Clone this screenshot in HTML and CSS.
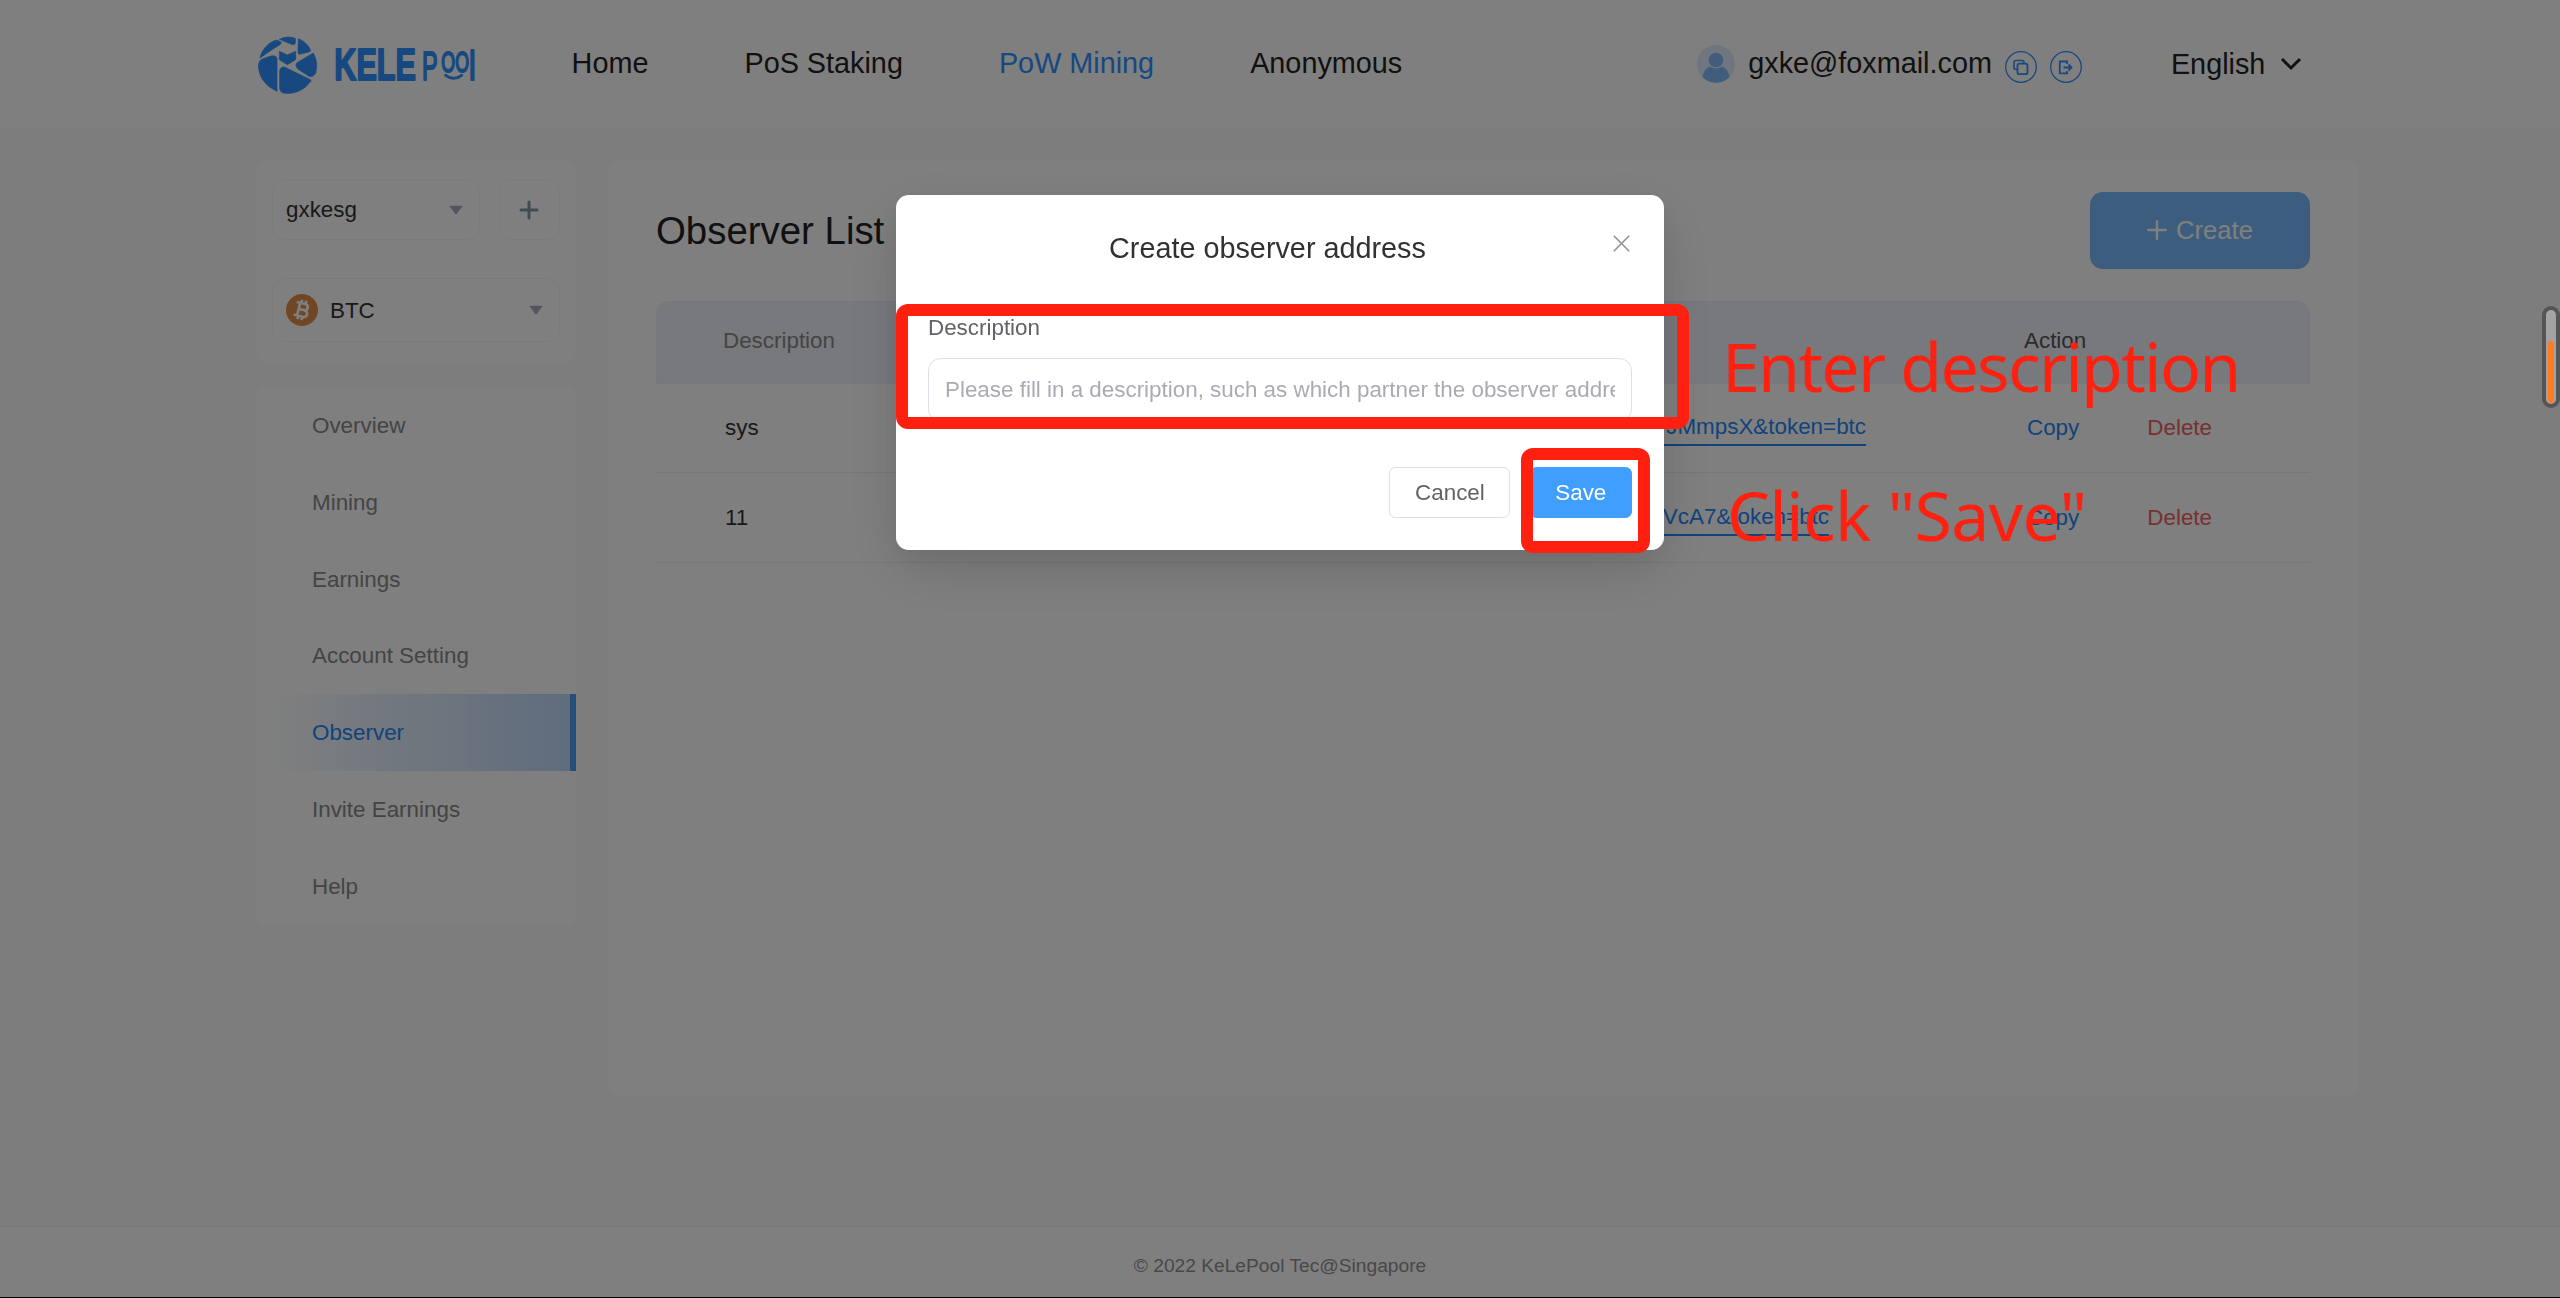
FILE: index.html
```html
<!DOCTYPE html>
<html lang="en">
<head>
<meta charset="utf-8">
<title>KelePool - Observer</title>
<link rel="stylesheet" href="styles.css">
</head>
<body>
<div class="page">
  <header class="header">
    <svg class="logo" viewBox="55 48 651 174" role="img" aria-label="KELE Pool">
      <g fill="#2f90ff" stroke="#2f90ff" stroke-width="2" stroke-linejoin="round">
        <path d="M61 114C66 90 86 66 112 60L124 66Q126 70 121 74L94 91Z"/>
        <path d="M119 58Q142 46 167 55V68Q167 77 156 73Z"/>
        <path d="M176 56Q202 66 213 91Q212 96 205 97L178 103Q174 101 175 92Z"/>
        <path d="M119 94L143 105L168 94V119L143 134L119 119Z"/>
        <path d="M112 214Q60 190 56 140Q57 122 66 118L90 109Q108 104 112 114Z"/>
        <path d="M221 99Q237 128 228 160Q220 173 208 169L176 148Q164 136 172 128Z"/>
        <path d="M120 152Q124 137 136 142L214 180Q215 184 208 190C190 214 158 224 130 219Q120 215 120 205Z"/>
      </g>
      <g class="logo-text">
        <text x="284" y="181" font-size="134" font-weight="bold" textLength="245" lengthAdjust="spacingAndGlyphs">KELE</text>
        <text x="547" y="179" font-size="124" textLength="47" lengthAdjust="spacingAndGlyphs">P</text>
        <text x="605" y="157" font-size="91" textLength="83" lengthAdjust="spacingAndGlyphs">OO</text>
        <text x="688" y="179" font-size="122" textLength="20" lengthAdjust="spacingAndGlyphs">l</text>
      </g>
      <path d="M618 166Q642 184 666 166" fill="none" stroke="#2f90ff" stroke-width="9" stroke-linecap="round"/>
    </svg>
    <nav class="nav">
      <a>Home</a><a>PoS Staking</a><a class="current">PoW Mining</a><a>Anonymous</a>
    </nav>
    <div class="user">
      <svg class="avatar" viewBox="0 0 38 38">
        <circle cx="19" cy="19" r="19" fill="#dfecff"/>
        <circle cx="19" cy="15" r="7.3" fill="#84b8f6"/>
        <path d="M5.5 32Q7 23.5 13 21.5Q19 25.5 25 21.5Q31 23.5 32.5 32A19 19 0 0 1 5.500 32Z" fill="#84b8f6"/>
      </svg>
      <span class="email">gxke@foxmail.com</span>
      <svg class="round" viewBox="0 0 32 32" fill="none" stroke="#2f90ff">
        <circle cx="16" cy="16" r="15.300" stroke-width="1.300"/>
        <rect x="12.500" y="12.700" width="10" height="10.500" rx="2" stroke-width="1.800"/>
        <path d="M12.200 18.500H11Q9 18.500 9 16.500V11.500Q9 9.500 11 9.500H17Q19 9.500 19 12" stroke-width="1.600"/>
      </svg>
      <svg class="round" viewBox="0 0 32 32" fill="none" stroke="#2f90ff">
        <circle cx="16" cy="16" r="15.300" stroke-width="1.300"/>
        <path d="M17 13V10.500H9.800V22.300H17V20M13.500 16.500H21.500M18.500 13.500L21.500 16.500L18.500 19.500" stroke-width="1.800"/>
      </svg>
    </div>
    <div class="lang">English
      <svg width="22" height="14" viewBox="0 0 22 14" fill="none" stroke="#222" stroke-width="3"><path d="M2 2L11 11L20 2"/></svg>
    </div>
  </header>

  <main class="main">
    <aside class="side">
      <section class="card pickers">
        <div class="picker-row">
          <div class="picker account">gxkesg<svg class="caret" viewBox="0 0 14 9"><path d="M1.500 1H12.500L7 8Z"/></svg></div>
          <div class="add"><svg width="20" height="20" viewBox="0 0 20 20" fill="none" stroke="#8399a4" stroke-width="3" stroke-linecap="round"><path d="M10 2V18M2 10H18"/></svg></div>
        </div>
        <div class="picker coin">
          <svg class="btc" viewBox="0 0 32 32"><circle cx="16" cy="16" r="16" fill="#e38d4b"/>
            <g transform="rotate(14 16 16)" fill="none" stroke="#fff" stroke-width="2.600"><path d="M9 9.500H17.500Q21 9.500 21 12.500T17.500 15.700H12.500M17.500 15.700Q22 16 22 19.200T18 22.500H9M12.500 9.500V22.500M13.800 6V9.500M18 6V9.500M13.800 22.500V26M18 22.500V26"/></g></svg>
          <span>BTC</span><svg class="caret" viewBox="0 0 14 9"><path d="M1.500 1H12.500L7 8Z"/></svg>
        </div>
      </section>
      <nav class="card menu">
        <a>Overview</a><a>Mining</a><a>Earnings</a><a>Account Setting</a><a class="active">Observer</a><a>Invite Earnings</a><a>Help</a>
      </nav>
    </aside>

    <section class="card content">
      <div class="title-row">
        <h1>Observer List</h1>
        <button class="create"><svg width="20" height="20" viewBox="0 0 20 20" fill="none" stroke="#fff" stroke-width="2.400" stroke-linecap="round"><path d="M10 1.200V18.800M1.200 10H18.800"/></svg>Create</button>
      </div>
      <div class="table">
        <div class="tr head"><span>Description</span><span></span><span class="dark">Action</span></div>
        <div class="tr"><span>sys</span><span><a class="url first">JMmpsX&amp;token=btc</a></span><span class="actions"><a class="copy">Copy</a><a class="delete">Delete</a></span></div>
        <div class="tr"><span>11</span><span><a class="url second">VcA7&amp;token=btc</a></span><span class="actions"><a class="copy">Copy</a><a class="delete">Delete</a></span></div>
      </div>
    </section>
  </main>

  <footer class="footer">© 2022 KeLePool Tec@Singapore</footer>
</div>

<div class="overlay">
  <div class="modal">
    <div class="modal-head">
      <h2>Create observer address</h2>
      <svg class="close" viewBox="0 0 17 17" fill="none" stroke="#909399" stroke-width="1.600"><path d="M.800 .800L16.200 16.200M16.200 .800L.800 16.200"/></svg>
    </div>
    <label class="label" for="desc">Description</label>
    <input class="input" id="desc" placeholder="Please fill in a description, such as which partner the observer address belongs to">
    <div class="buttons"><button class="btn">Cancel</button><button class="btn primary">Save</button></div>
  </div>
</div>

<div class="mark box-input"></div>
<div class="mark box-save"></div>
<div class="note note-enter">Enter description</div>
<div class="note note-click">Click "Save"</div>
<div class="gauge"><div class="gauge-fill"></div></div>
<div class="edge"></div>
</body>
</html>
```
FILE: styles.css
```css
* { box-sizing: border-box; }
html, body { margin: 0; height: 100%; overflow: hidden; }
body { font-family: "Liberation Sans", Arial, sans-serif; font-size: 22.4px; color: #333; }
h1, h2 { margin: 0; font-weight: normal; }
button, input { font-family: inherit; }

.page { width: 2560px; height: 1298px; display: flex; flex-direction: column; background: #fafafa; }

.header { height: 128px; flex: none; background: #fff; display: flex; align-items: flex-start; padding-left: 258px; font-size: 28.8px; line-height: 34px; color: #222; }
.logo { width: 217px; height: 58px; margin-top: 36px; flex: none; overflow: visible; }
.logo-text { font-family: "Liberation Sans", Arial, sans-serif; fill: #2f90ff; stroke: #2f90ff; stroke-width: 6px; stroke-linejoin: round; }
.nav { display: flex; gap: 96px; margin: 46px 0 0 96.6px; white-space: nowrap; }
.current { color: #2f90ff; }
.user { display: flex; margin: 45px 0 0 295px; align-items: flex-start; }
.avatar { width: 38px; height: 38px; }
.email { margin: 1px 13px 0 13px; }
.round { width: 32px; height: 32px; margin: 6px 13px 0 0; }
.lang { display: flex; align-items: center; gap: 15px; margin: 47px 0 0 76px; }

.main { flex: 1; display: flex; align-items: flex-start; gap: 32px; padding: 32px 202px 0 256px; }
.card { background: #fff; border-radius: 12.8px; }
.side { width: 320px; display: flex; flex-direction: column; gap: 25px; }
.pickers { height: 202px; padding: 19px 16px; display: flex; flex-direction: column; gap: 38px; }
.picker-row { display: flex; justify-content: space-between; }
.picker, .add { border: 1px solid #f5f5f7; border-radius: 12.8px; height: 61px; display: flex; align-items: center; }
.picker { padding: 0 16px 0 13px; color: #333; }
.account { width: 208px; justify-content: space-between; }
.add { width: 61px; justify-content: center; padding-right: 1px; }
.coin { height: 64px; gap: 12px; }
.coin span { padding-top: 1px; }
.coin .caret { margin-left: auto; }
.btc { width: 32px; height: 32px; }
.caret { width: 14px; height: 10px; fill: #a5aab6; stroke: #a5aab6; stroke-width: 1.5; stroke-linejoin: round; }
.menu { display: flex; flex-direction: column; }
.menu a { height: 76.8px; line-height: 78px; padding-left: 56px; color: #888; }
.menu .active { color: #2486f5; border-right: 6px solid #4f9bf5; background: linear-gradient(90deg, #fff 3%, #bedafb); }

.content { width: 1750px; height: 936px; padding: 32px 48px; }
.title-row { display: flex; justify-content: space-between; height: 76.8px; }
h1 { font-size: 38.4px; line-height: 44px; margin-top: 17px; color: #222; }
.create { width: 220px; height: 76.8px; border: 0; border-radius: 12.8px; background: #7abaff; color: #fff; font-size: 25.6px; display: flex; align-items: center; justify-content: center; gap: 9px; }
.table { margin-top: 32px; }
.tr { display: grid; grid-template-columns: 745px 554px 1fr; align-items: center; height: 89.3px; padding-left: 69px; border-bottom: 1.5px solid #ebeef5; }
.head { height: 83.4px; border: 1.5px solid #ebeef5; border-radius: 12.8px 12.8px 0 0; background: #eff2fa; color: #888; padding: 0 0 2px 66px; }
.head .dark { color: #555; padding-left: 2px; }
.url { display: inline-block; text-align: right; color: #2486f5; line-height: 24px; padding-bottom: 5px; border-bottom: 2px solid #2486f5; margin-top: 5px; }
.first { width: 396px; }
.second { width: 359px; }
.actions { display: flex; gap: 68px; padding-left: 3px; }
.copy { color: #2486f5; }
.delete { color: #ee6262; }

.footer { height: 72px; flex: none; background: #fff; border-top: 1.5px solid #ebeef5; text-align: center; font-size: 19.2px; line-height: 77px; color: #909090; }

.overlay { position: fixed; inset: 0; background: rgba(0, 0, 0, .5); }
.modal { width: 768px; height: 355px; margin: 195px auto 0; background: #fff; border-radius: 12.8px; padding: 0 32px; box-shadow: 0 19px 58px rgba(0, 0, 0, .12), 0 13px 32px rgba(0, 0, 0, .06); display: flex; flex-direction: column; }
.modal-head { display: flex; height: 121px; padding: 36px 2px 0 181px; justify-content: space-between; align-items: flex-start; }
h2 { font-size: 28.8px; line-height: 34px; color: #303133; white-space: nowrap; }
.close { width: 17px; height: 17px; margin-top: 4px; }
.label { line-height: 24px; height: 42px; color: #606266; }
.input { width: 704px; height: 64px; border: 1.6px solid #dcdfe6; border-radius: 12.8px; padding: 0 16px; font-size: 22.4px; background: #fff; color: #606266; outline: 0; }
.input::placeholder { color: #a8abb2; opacity: 1; }
.buttons { display: flex; justify-content: flex-end; gap: 19.2px; margin-top: 45px; }
.btn { height: 51px; padding: 0 24px 1px; border: 1.6px solid #dcdfe6; border-radius: 6.4px; background: #fff; color: #606266; font-size: 22.4px; line-height: 45px; }
.btn:first-child { width: 121px; }
.primary { width: 102.4px; background: #409eff; border-color: #409eff; color: #fff; }

/* annotations on top of the page */
.mark { position: absolute; border: 12px solid #ff2010; border-radius: 12px; }
.box-input { left: 896px; top: 304px; width: 793px; height: 125px; }
.box-save { left: 1521px; top: 448px; width: 129px; height: 105px; }
.note { position: absolute; font-family: "Noto Sans", sans-serif; font-size: 68px; line-height: 92px; color: #ff2010; white-space: nowrap; }
.note-enter { left: 1722px; top: 320px; letter-spacing: -1.7px; }
.note-click { left: 1727px; top: 469px; letter-spacing: -.7px; }
.gauge { position: absolute; right: 0; top: 306px; width: 18px; height: 102px; border: 4px solid #555; border-radius: 9px; background: #a3a3a3; }
.gauge-fill { width: 6px; height: 62px; margin: 31px auto 0; border-radius: 3px; background: #ff7b20; }
.edge { position: absolute; left: 0; right: 0; top: 1297px; height: 1px; background: #000; }
```
